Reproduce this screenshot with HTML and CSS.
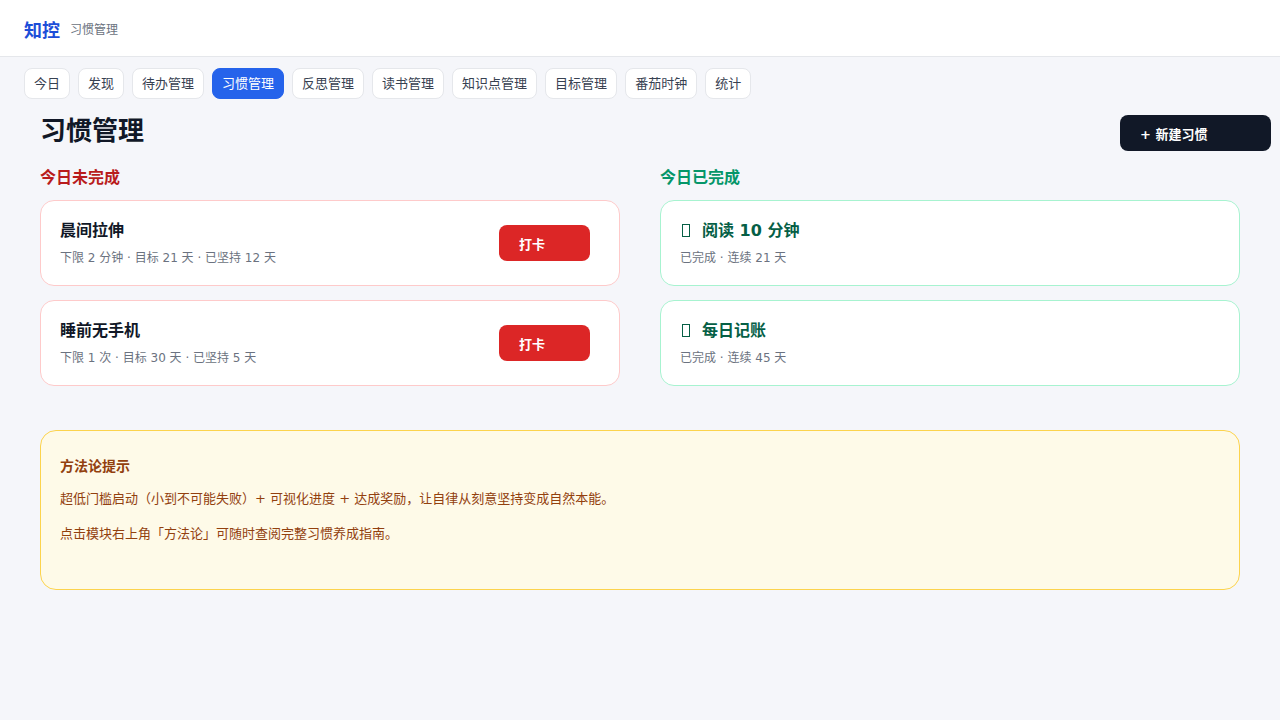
FILE: index.html
```html
<!DOCTYPE html>
<html lang="zh-CN">
<head>
	<meta charset="UTF-8">
	<title>知控 - 习惯管理</title>
	<link rel="stylesheet" href="styles.css">
</head>
<body>
	<header class="topbar">
		<span class="logo">知控</span>
		<span class="crumb">习惯管理</span>
	</header>

	<nav class="tabs">
		<a class="tab">今日</a>
		<a class="tab">发现</a>
		<a class="tab">待办管理</a>
		<a class="tab active">习惯管理</a>
		<a class="tab">反思管理</a>
		<a class="tab">读书管理</a>
		<a class="tab">知识点管理</a>
		<a class="tab">目标管理</a>
		<a class="tab">番茄时钟</a>
		<a class="tab">统计</a>
	</nav>

	<main class="page">
		<div class="page-head">
			<h1>习惯管理</h1>
			<button class="btn-new">+ 新建习惯</button>
		</div>

		<div class="columns">
			<section>
				<h2 class="col-title todo">今日未完成</h2>
				<div class="habit pending">
					<div class="habit-info">
						<div class="habit-name">晨间拉伸</div>
						<div class="habit-meta">下限 2 分钟 · 目标 21 天 · 已坚持 12 天</div>
					</div>
					<button class="btn-check">打卡</button>
				</div>
				<div class="habit pending">
					<div class="habit-info">
						<div class="habit-name">睡前无手机</div>
						<div class="habit-meta">下限 1 次 · 目标 30 天 · 已坚持 5 天</div>
					</div>
					<button class="btn-check">打卡</button>
				</div>
			</section>

			<section>
				<h2 class="col-title done">今日已完成</h2>
				<div class="habit finished">
					<div class="habit-info">
						<div class="habit-name"><span class="tofu"></span>阅读 10 分钟</div>
						<div class="habit-meta">已完成 · 连续 21 天</div>
					</div>
				</div>
				<div class="habit finished">
					<div class="habit-info">
						<div class="habit-name"><span class="tofu"></span>每日记账</div>
						<div class="habit-meta">已完成 · 连续 45 天</div>
					</div>
				</div>
			</section>
		</div>

		<div class="tip">
			<h3>方法论提示</h3>
			<p>超低门槛启动（小到不可能失败）+ 可视化进度 + 达成奖励，让自律从刻意坚持变成自然本能。</p>
			<p>点击模块右上角「方法论」可随时查阅完整习惯养成指南。</p>
		</div>
	</main>
</body>
</html>
```

FILE: styles.css
```css
body {
	margin: 0;
	background-color: #f5f6fa;
	font-family: "DejaVu Sans", "Noto Sans CJK SC", sans-serif;
	color: #111827;
}
.topbar {
	height: 56px;
	background-color: #fff;
	border-bottom: 1px solid #e5e7eb;
	display: flex;
	align-items: center;
	padding: 0 24px;
	gap: 10px;
}
.logo {
	color: #1d4ed8;
	font-size: 18px;
	font-weight: 700;
	margin-top: 2px;
}
.crumb {
	color: #6b7280;
	font-size: 12px;
}
.tabs {
	display: flex;
	gap: 8px;
	padding: 11px 24px 0;
}
.tab {
	display: inline-block;
	height: 29px;
	line-height: 29px;
	padding: 0 9px;
	background-color: #fff;
	border: 1px solid #e5e7eb;
	border-radius: 8px;
	font-size: 13px;
	color: #374151;
}
.tab.active {
	background-color: #2563eb;
	border-color: #2563eb;
	color: #fff;
}
.page {
	padding: 0 40px;
}
.page-head {
	display: flex;
	justify-content: space-between;
	align-items: flex-start;
	margin-top: 16px;
}
.page-head h1 {
	margin: 0;
	font-size: 26px;
	font-weight: 700;
	line-height: 32px;
}
.btn-new {
	width: 151px;
	height: 36px;
	margin-right: -31px;
	padding: 0 20px;
	text-align: left;
	background-color: #111827;
	color: #fff;
	border: none;
	border-radius: 8px;
	font-family: inherit;
	font-size: 13px;
	font-weight: 700;
}
.columns {
	display: grid;
	grid-template-columns: 1fr 1fr;
	gap: 40px;
	margin-top: 14px;
}
.col-title {
	margin: 0 0 9px;
	font-size: 16px;
	font-weight: 700;
	line-height: 26px;
}
.col-title.todo {
	color: #b91c1c;
}
.col-title.done {
	color: #059669;
}
.habit {
	display: flex;
	justify-content: space-between;
	align-items: center;
	height: 86px;
	box-sizing: border-box;
	padding: 0 29px 0 19px;
	background-color: #fff;
	border: 1px solid;
	border-radius: 14px;
	margin-bottom: 14px;
}
.habit.pending {
	border-color: #fecaca;
}
.habit.finished {
	border-color: #a7f3d0;
}
.habit-info {
	padding-top: 1px;
}
.habit-name {
	font-size: 16px;
	font-weight: 700;
	line-height: 22px;
}
.finished .habit-name {
	color: #065f46;
}
.tofu {
	display: inline-block;
	width: 6px;
	height: 11px;
	border: 1.5px solid #065f46;
	margin: 0 12px 0 2px;
	vertical-align: -1px;
}
.habit-meta {
	margin-top: 8px;
	font-size: 12px;
	line-height: 17px;
	color: #6b7280;
}
.btn-check {
	width: 91px;
	height: 36px;
	padding: 0 20px;
	text-align: left;
	background-color: #dc2626;
	color: #fff;
	border: none;
	border-radius: 8px;
	font-family: inherit;
	font-size: 13px;
	font-weight: 700;
}
.tip {
	margin-top: 30px;
	height: 160px;
	box-sizing: border-box;
	padding: 24px 19px;
	background-color: #fefae8;
	border: 1px solid #fcd34d;
	border-radius: 16px;
	color: #92400e;
}
.tip h3 {
	margin: 0 0 11px;
	font-size: 14px;
	font-weight: 700;
	line-height: 22px;
}
.tip p {
	margin: 0 0 14px;
	font-size: 13px;
	line-height: 21px;
}
```
